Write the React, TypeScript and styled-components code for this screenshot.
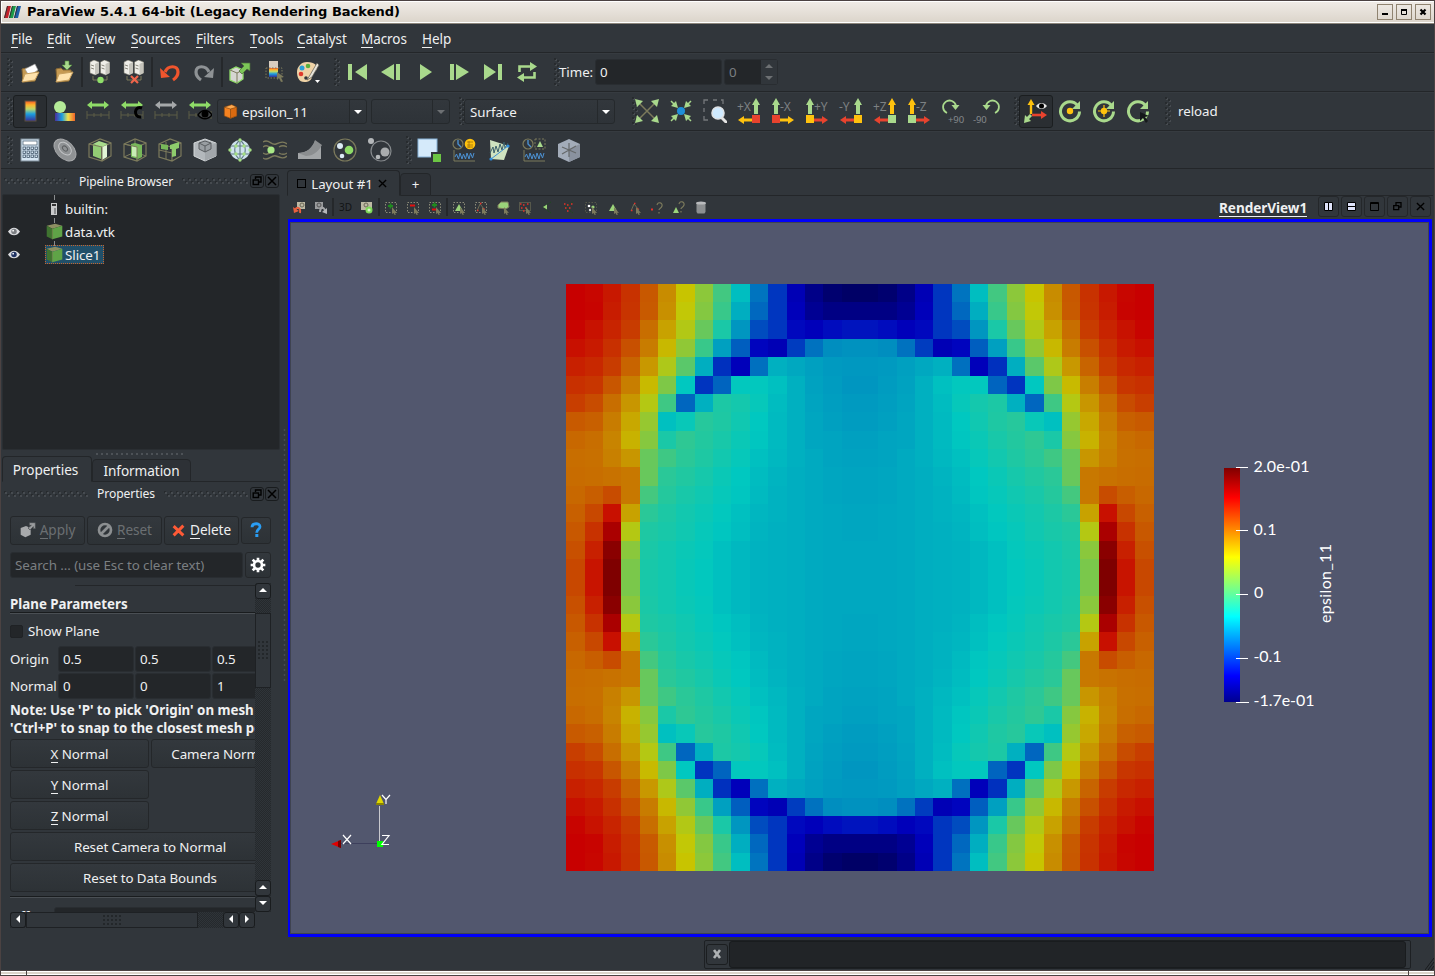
import React from 'react';
import styled, { createGlobalStyle, css } from 'styled-components';

const Global = createGlobalStyle`
  * { box-sizing: border-box; }
  body { margin: 0; background: #31363b; overflow: hidden; }
`;

const line = '#232629';
const green = '#a9d98c';
const olive = '#7c7a5c';

const Win = styled.div`
  width: 1435px; height: 976px; display: flex; flex-direction: column; background: #31363b;
  border-left: 1px solid #4b4242; border-right: 1px solid #4b4242;
  font: 13.33px/18px 'Noto Sans', sans-serif; letter-spacing: -0.06px; color: #eff0f1; white-space: nowrap; overflow: hidden;
  svg { display: block; flex: none; }
`;
const TitleBar = styled.div`
  height: 24px; flex: none; display: flex; align-items: center; padding: 0 3px 0 3px;
  border-top: 1px solid #4b4242; border-bottom: 1px solid #8c857b;
  box-shadow: inset 0 1px #fff, inset 0 -1px #fff, inset 1px 0 #fff;
  background: linear-gradient(#f0ece7, #dbd4ca);
  font: bold 13px/20px 'DejaVu Sans', sans-serif; color: #000;
`;
const TitleText = styled.div`flex: 1; padding-left: 6px; letter-spacing: 0.015px;`;
const WinBtn = styled.div`
  width: 16px; height: 16px; margin-left: 3px; border: 1px solid #8f8370; display: flex; align-items: center; justify-content: center;
`;
const MenuBar = styled.div`
  height: 29px; flex: none; display: flex; align-items: center; padding: 1px 0 0 10px; border-bottom: 1px solid ${line};
`;
const MenuItem = styled.div<{ $w: number }>`width: ${p => p.$w}px; font-size: 13.5px;`;
const Mn = styled.span`border-bottom: 1px solid currentColor; display: inline-block; line-height: 16px;`;
const Toolbar = styled.div<{ $h: number }>`
  height: ${p => p.$h}px; flex: none; display: flex; align-items: center; border-bottom: 1px solid ${line}; padding-left: 6px;
  box-shadow: inset 0 1px #363b40;
`;
const Grip = styled.div<{ $l?: number; $r?: number }>`
  width: 6px; height: 28px; flex: none; margin: 0 ${p => p.$r ?? 0}px 0 ${p => p.$l ?? 0}px;
  background: radial-gradient(circle at 1px 1px, #272b2e 0.7px, transparent 1px) 0 0 / 6px 5px,
    radial-gradient(circle at 2px 2px, #474c51 0.7px, transparent 1px) 0 0 / 6px 5px,
    radial-gradient(circle at 4px 3px, #272b2e 0.7px, transparent 1px) 0 0 / 6px 5px,
    radial-gradient(circle at 5px 4px, #474c51 0.7px, transparent 1px) 0 0 / 6px 5px;
`;
const Slot = styled.div<{ $w?: number; $on?: boolean }>`
  width: ${p => p.$w ?? 34}px; height: 33px; flex: none; display: flex; align-items: center; justify-content: center;
  ${p => p.$on && css`border: 1px solid #1b1e20; border-radius: 3px; background: #2a2e32;`}
`;
const Sep = styled.div<{ $h?: number }>`width: 2px; height: ${p => p.$h ?? 30}px; flex: none; background: #25282b;`;
const Field = styled.div<{ $w: number; $l?: number; $dim?: boolean; $h?: number }>`
  width: ${p => p.$w}px; height: ${p => p.$h ?? 26}px; margin-left: ${p => p.$l ?? 0}px; flex: none; background: #232629;
  border: 1px solid #292d31; border-radius: 3px; padding-left: 4px; display: flex; align-items: center;
  color: ${p => (p.$dim ? '#7b7f82' : '#eff0f1')};
`;
const Combo = styled.div<{ $w: number; $l?: number; $dim?: boolean }>`
  width: ${p => p.$w}px; height: 25px; margin-left: ${p => p.$l ?? 0}px; flex: none; display: flex; align-items: center;
  border: 1px solid #25292c; border-radius: 3px; background: linear-gradient(#32373c, #2e3338); padding-left: 5px; gap: 4px;
`;
const ComboText = styled.div`flex: 1; padding-top: 1px;`;
const ComboArrow = styled.div<{ $dim?: boolean }>`
  width: 17px; height: 23px; border-left: 1px solid #25292c; display: flex; align-items: center; justify-content: center; padding-top: 1px;
  &::after { content: ''; border: 4px solid transparent; border-top-color: ${p => (p.$dim ? '#6d7073' : '#fff')}; border-bottom: 0; }
`;
const Spin = styled.div`
  width: 16px; height: 24px; display: flex; flex-direction: column; align-items: center; justify-content: space-around; background: #31363b;
`;
const Tri = styled.i<{ $d: 'u' | 'd' | 'l' | 'r'; $c?: string }>`
  width: 0; height: 0; border: 4px solid transparent;
  ${p => p.$d === 'u' && css`border-top: 0; border-bottom-color: ${p.$c ?? '#fff'};`}
  ${p => p.$d === 'd' && css`border-bottom: 0; border-top-color: ${p.$c ?? '#fff'};`}
  ${p => p.$d === 'l' && css`border-left: 0; border-right-color: ${p.$c ?? '#fff'};`}
  ${p => p.$d === 'r' && css`border-right: 0; border-left-color: ${p.$c ?? '#fff'};`}
`;
const Main = styled.div`height: 767px; flex: none; display: flex;`;
const Left = styled.div`width: 279px; flex: none; display: flex; flex-direction: column;`;
const DockTitle = styled.div<{ $h: number; $b?: number }>`
  height: ${p => p.$h}px; flex: none; display: flex; align-items: center; padding: 0 1px ${p => p.$b ?? 0}px 3px; font-size: 12.1px;
`;
const HDots = styled.div`
  flex: 1; height: 6px;
  background: radial-gradient(circle at 2px 2px, #474c51 0.7px, transparent 1px) 0 0 / 6px 6px,
    radial-gradient(circle at 1px 1px, #272b2e 0.7px, transparent 1px) 0 0 / 6px 6px,
    radial-gradient(circle at 5px 5px, #474c51 0.7px, transparent 1px) 0 0 / 6px 6px,
    radial-gradient(circle at 4px 4px, #272b2e 0.7px, transparent 1px) 0 0 / 6px 6px;
`;
const DockName = styled.div<{ $m: string }>`margin: ${p => p.$m}; padding-top: 1px;`;
const DockBtn = styled.div`
  width: 14px; height: 14px; margin-left: 1px; border: 1px solid #191c1e; border-radius: 3px; display: flex; align-items: center; justify-content: center;
`;
const Tree = styled.div`
  height: 256px; flex: none; margin-left: 1px; width: 278px; background: #232629; border: 1px solid #2a2e32; border-radius: 2px; padding-top: 2px;
`;
const TreeRow = styled.div`height: 23px; display: flex; align-items: center; padding-left: 5px;`;
const Eye = styled.div`width: 16px; margin-right: 21px;`;
const Node = styled.div<{ $sel?: boolean }>`
  position: relative; display: flex; align-items: center; height: 19px; padding: 0 3px 0 0; border: 1px dotted ${p => (p.$sel ? '#c8642c' : 'transparent')};
  background: ${p => (p.$sel ? '#214f69' : 'transparent')};
  &::before { content: ''; position: absolute; left: 8px; top: -5px; width: 1px; height: 5px; background: #8a8d8f; }
`;
const SplitH = styled.div`
  height: 3px; width: 90px; margin: 3px 0 0 94px; flex: none;
  background: radial-gradient(circle at 2px 1px, #4d5257 0.8px, transparent 1.2px) 0 0 / 5px 3px;
`;
const Tabs = styled.div`height: 26px; flex: none; display: flex; align-items: flex-end; margin-left: 1px;`;
const Tab = styled.div<{ $w: number; $on?: boolean; $h: number }>`
  width: ${p => p.$w}px; height: ${p => p.$h}px; flex: none; display: flex; align-items: center; justify-content: center;
  border: 1px solid ${line}; border-radius: 4px 4px 0 0; border-bottom-color: ${p => (p.$on ? '#31363b' : line)};
  background: ${p => (p.$on ? '#31363b' : '#2d3136')};
`;
const DockTab = styled(Tab)`padding: ${p => (p.$on ? '1px 3px 0 0' : '0')}; font-size: 13.6px;`;
const TabFill = styled.div`flex: 1; border-bottom: 1px solid ${line};`;
const BtnRow = styled.div`display: flex; gap: 2px; margin: 10px 0 0 9px; height: 30px; align-items: center; flex: none; font-size: 13.6px;`;
const Btn = styled.div<{ $w: number; $h?: number; $dim?: boolean; $gap?: number }>`
  width: ${p => p.$w}px; height: ${p => p.$h ?? 29}px; flex: none; border: 1px solid #24272a; border-radius: 3px;
  background: linear-gradient(#33383d, #2d3236); display: flex; align-items: center; justify-content: center; gap: ${p => p.$gap ?? 4}px;
  color: ${p => (p.$dim ? '#6b6f72' : '#eff0f1')};
`;
const SearchRow = styled.div`display: flex; gap: 2px; margin: 7px 0 0 9px; height: 26px; flex: none;`;
const Scroll = styled.div`display: flex; margin: 5px 0 0 9px; height: 330px; flex: none;`;
const Content = styled.div`width: 245px; height: 329px; overflow: hidden; flex: none;`;
const TopLine = styled.div`height: 3px; margin-left: 65px; border-bottom: 1px solid ${line};`;
const Heading = styled.div`
  height: 28px; margin-bottom: 7px; padding-top: 9px; font-weight: bold; letter-spacing: 0; border-bottom: 1px solid #4a4f54; box-shadow: inset 0 -1px #191c1e;
`;
const CheckRow = styled.div`height: 20px; display: flex; align-items: center; gap: 5px; margin-bottom: 4px;`;
const Box = styled.div`width: 13px; height: 13px; background: #232629; border: 1px solid #1f2225; border-radius: 2px;`;
const InRow = styled.div`height: 27px; display: flex; align-items: center; gap: 1px;`;
const Lab = styled.div<{ $w: number }>`width: ${p => p.$w}px; flex: none;`;
const Note = styled.div`font-weight: bold; letter-spacing: -0.02px; line-height: 18px; height: 40px; padding-top: 2px;`;
const Line2 = styled.div`display: flex; gap: 2px; height: 31px; align-items: flex-start;`;
const Rule = styled.div`height: 2px; margin-top: 2px; background: #191c1e; border-bottom: 1px solid #4a4f54;`;
const OffRow = styled.div`display: flex; margin-top: 9px;`;
const OffLab = styled.div`width: 44px; flex: none; line-height: 18px; height: 18px;`;
const hatch = css`background: repeating-conic-gradient(#25292c 0 25%, #2f3439 0 50%) 0 0 / 2px 2px;`;
const VBar = styled.div`width: 16px; height: 329px; flex: none; display: flex; flex-direction: column; ${hatch}`;
const HBar = styled.div`width: 245px; height: 16px; margin: -1px 0 0 9px; flex: none; display: flex; ${hatch}`;
const SBtn = styled.div`
  width: 16px; height: 16px; flex: none; border: 1px solid #191c1e; border-radius: 3px; background: #31363b; display: flex; align-items: center; justify-content: center;
  padding: 0 1px 2px 0;
`;
const Thumb = styled.div<{ $w: number; $h: number }>`
  width: ${p => p.$w}px; height: ${p => p.$h}px; flex: none; border: 1px solid #1e2124; background: #31363b; display: flex; align-items: center; justify-content: center;
`;
const Dots = styled.div<{ $w: number; $h: number }>`
  width: ${p => p.$w}px; height: ${p => p.$h}px;
  background: radial-gradient(circle at 1px 1px, #23272a 0.7px, transparent 1px) 0 0 / 4px 4px;
`;
const Gap = styled.div<{ $s: number }>`flex: 0 0 ${p => p.$s}px;`;
const SplitV = styled.div`
  width: 7px; flex: none; padding: 259px 0 0 3px;
  &::before { content: ''; display: block; width: 3px; height: 255px; background: radial-gradient(circle at 1.5px 2px, #474c51 0.8px, transparent 1.2px) 0 0 / 3px 5px; }
`;
const Right = styled.div`width: 1146px; flex: none; display: flex; flex-direction: column;`;
const ViewTabs = styled.div`height: 27px; flex: none; display: flex; align-items: flex-end; padding-top: 1px;`;
const ViewTab = styled(Tab)<{ $t?: number }>`gap: 5px; padding: ${p => p.$t ?? 0}px 3px 0 0;`;
const PlusTab = styled(Tab)`padding-bottom: 1px;`;
const ViewBar = styled.div`height: 23px; flex: none; display: flex; align-items: center; padding: 0 0 2px 1px;`;
const ViewName = styled.div`
  margin-left: auto; width: 88px; font-weight: bold; border-bottom: 1px solid #eff0f1; line-height: 16px; margin-right: 11px; font-size: 13.6px; margin-top: 3px;
`;
const ViewBtn = styled.div`
  width: 21px; height: 21px; margin-right: 2px; border: 1px solid #24272a; border-radius: 3px; display: flex; align-items: center; justify-content: center;
`;
const Viewport = styled.div`height: 718px; width: 1144px; margin-left: 1px; flex: none; border: 3px solid #0000fa; background: #52576e; border-left-width: 2px;`;
const Status = styled.div`height: 34px; flex: none; display: flex; padding: 4px 0 0 703px;`;
const Prog = styled.div`width: 707px; height: 29px; border: 1px solid #1d2023; border-radius: 2px; display: flex; align-items: center; padding: 0 0 1px 1px; gap: 1px;`;
const ProgBtn = styled.div`width: 22px; height: 21px; border: 1px solid #1b1e20; border-radius: 3px; display: flex; align-items: center; justify-content: center;`;
const ProgField = styled.div`width: 677px; height: 27px; background: #212427; border: 1px solid #191c1e; border-radius: 3px;`;
const SizeGrip = styled.svg`margin: 17px 0 0 14px;`;
const Bottom = styled.div`
  height: 6px; flex: none; border-top: 1px solid #4b4242; border-bottom: 1px solid #4b4242; background: linear-gradient(#fff 1px, #dbd4ca 1px 3px, #fff 3px);
  display: flex; justify-content: space-between; padding: 0 25px;
`;
const Notch = styled.div`width: 1px; height: 4px; background: #4b4242;`;

type IP = { s?: number; children?: React.ReactNode };
const I = ({ s = 24, children }: IP) => <svg width={s} height={s} viewBox="0 0 24 24" fill="none">{children}</svg>;

const Folder = ({ save }: { save?: boolean }) => (
  <I>
    <path d="M4 9l5-1 2 2h8v3l-2 8-12 1z" fill="#c69a52" stroke="#8a6a35" />
    {!save && <path d="M7 9l10-5 3 6-9 6z" fill="#fff" stroke="#999" strokeWidth=".6" />}
    <path d="M4 22l3-8 14-2-4 8z" fill="#ffe3ad" stroke="#c79f5d" />
    {save && <path d="M13 1h4v4h3l-5 5-5-5h3z" fill={green} stroke="#4f8a3a" strokeWidth=".6" />}
  </I>
);
const Servers = ({ off }: { off?: boolean }) => (
  <I>
    {[2, 12.5].map(x => (
      <g key={x}>
        <path d={`M${x} 2l4-2 5 2v11l-4 2-5-2z`} fill="#efeee8" stroke="#77756a" strokeWidth=".6" />
        <path d={`M${x + 5} 4l4-2v11l-4 2z`} fill="#c5c4bc" />
        <path d={`M${x + 1} 5l3 1M${x + 1} 8l3 1`} stroke="#8a887c" />
      </g>
    ))}
    <path d="M5 16v4h14v-4" stroke={olive} />
    {off ? <path d="M9 16l7 7M16 16l-7 7" stroke="#f0654b" strokeWidth="2.200" /> : <circle cx="12.500" cy="20" r="3.200" fill="#8fe06a" />}
  </I>
);
const Undo = ({ c, flip }: { c: string; flip?: boolean }) => (
  <I><g transform={flip ? 'translate(24 0) scale(-1 1)' : ''}>
    <path d="M7 12C10 5 20 5 20 12c0 4-2 6-5 8" stroke={c} strokeWidth="3.200" /><path d="M2 8l1 10 9-1z" fill={c} />
  </g></I>
);
const Cube = ({ mode, c = '#78b85a' }: { mode: number; c?: string }) => (
  <I>
    <path d="M1 6l11-5 11 4v13l-9 5-13-4zM1 6l13 3 9-4M14 9v14" stroke={olive} strokeWidth="1.200" />
    {mode === 0 && <><path d="M5 6l8 2v13l-8-3z" fill="#93cd74" /><path d="M14 9l5-2v12l-5 3z" fill="#e2f5d6" /><path d="M5 6l6-3 9 3-6 3z" fill="#a8db8b" /><path d="M1 6l13 3M14 9v14" stroke={olive} /></>}
    {mode === 1 && <><path d="M12 1v13M1 19l11-5 11 4" stroke={olive} /><path d="M8 6l4-1 7 2v12l-4 2-7-2z" fill={c} /><path d="M9 8l5 1v10l-5-1z" fill="#c9edb4" /><path d="M1 6l13 3M14 9v14" stroke={olive} /></>}
    {mode === 2 && <><path d="M1 12l13 3M8 4v17" stroke={olive} /><path d="M3 6l7 1v5l-7-1z" fill={c} /><path d="M12 7l9-3v6l-3 1v7l-4 1v-8h-2z" fill="#8ecb6c" /></>}
  </I>
);
const Solid = ({ a, b, d, s, edge }: { a: string; b: string; d: string; s?: number; edge?: string }) => (
  <I s={s}><path d="M2 5l12-4 8 4v14l-10 4-10-4z" fill={a} /><path d="M2 5l12-4 8 4-10 3z" fill={d} /><path d="M12 8l10-3v14l-10 4z" fill={b} />
    {edge && <path d="M2 5l12-4 8 4v14l-10 4-10-4zM2 5l10 3 10-3M12 8v15" stroke={edge} />}</I>
);
const SourceCube = () => (
  <I s={17}><path d="M1 4l12-3 10 3-14 4z" fill="#8d8f62" /><path d="M1 4l8 4v15l-8-4z" fill="#3f7330" /><path d="M9 8l14-4v15L9 23z" fill="#5fa347" /><path d="M9 8v15" stroke="#7b8a50" /></I>
);
const Range = ({ c = '#8fdc68', k }: { c?: string; k?: string }) => (
  <I>
    <path d="M1 6l5-4v2.500h12V2l5 4-5 4V7.500H6V10z" fill={c} />
    <path d="M1 16h22M1 12v8M8 14v4M15 14v4M23 12v8" stroke="#5c5c47" />
    {k === 'c' && <path d="M22 9c-8-3-9 10-1 9" stroke="#000" strokeWidth="3" />}
    {k === 'e' && <><path d="M10 16c4-6 10-6 14 0-4 5-10 5-14 0z" fill="#45484a" stroke="#000" strokeWidth="1.400" /><circle cx="17" cy="15" r="3.500" fill="#000" /></>}
  </I>
);
const Gradient = () => (
  <linearGradient id="rb" x1="0" y1="1" x2="0" y2="0"><stop offset="0" stopColor="#35309c" /><stop offset=".35" stopColor="#1c9fe0" /><stop offset=".6" stopColor="#bcd86a" /><stop offset=".8" stopColor="#ffb52c" /><stop offset="1" stopColor="#f25b28" /></linearGradient>
);
const RED = '#e8432e', YEL = '#ffc20e';
const AxisIcon = ({ t, l, up, box, hor }: { t: string; l: boolean; up: string; box: string; hor: string }) => {
  const x = l ? 18 : 6;
  return (
    <svg width="30" height="28" viewBox="0 0 30 28" fill="none"><g transform={l ? 'translate(4 0)' : 'translate(2 0)'}>
      <text x={l ? -1 : 10} y="14" fontSize="12" fill="#7d8183" fontFamily="Noto Sans">{t}</text>
      <path d={`M${x} 1l4 7h-2v9h-4V8h-2z`} fill={up} />
      <path d={l ? 'M0 23l6-4v2.500h8v3H6V27z' : 'M24 23l-6-4v2.500h-8v3h8V27z'} fill={hor} />
      <rect x={x - 4} y="18" width="8" height="8" fill={box} />
    </g></svg>
  );
};
const Rot = ({ t, flip }: { t: string; flip?: boolean }) => (
  <svg width="30" height="30" viewBox="0 0 30 30" fill="none">
    <g transform={flip ? 'translate(32 0) scale(-1 1)' : ''}><path d="M9 17a6.500 6.500 0 1 1 9-7" stroke={green} strokeWidth="1.800" /><path d="M13.500 9h8l-4 5z" fill={green} /></g>
    <text x={flip ? 1 : 10} y="27" fontSize="9.500" fill="#85898c" fontFamily="Noto Sans">{t}</text>
  </svg>
);
const Ring = ({ k }: { k: number }) => (
  <I><path d="M19.500 6.500a9.500 9.500 0 1 0 2 6" stroke={green} strokeWidth="3" /><path d="M22 2v8h-8z" fill={green} />
    {k < 2 && <circle cx="12" cy="12" r={3.200} fill={YEL} />}
    {k === 1 && <path d="M12 6v12M6 12h12" stroke={YEL} strokeWidth="1.200" />}
    {k === 2 && <path d="M14 13l9 4-4 1 3 4-2 2-3-5-3 3z" fill="#15181a" />}
  </I>
);
const Clock = ({ k }: { k: number }) => (
  <I>
    <circle cx="6" cy="6" r="5" stroke={olive} strokeWidth="1.200" /><path d="M6 2v4l3 3" stroke="#4b8fd0" strokeWidth="1.400" />
    {k === 0 ? <><circle cx="18" cy="6" r="5.300" fill={YEL} /><path d="M15 4h6M15 7h6M15 9h6M17 3v7" stroke="#a0720a" strokeWidth=".8" /></>
      : <><path d="M13 1h10v10H13z" stroke={olive} strokeDasharray="2 1.500" /><path d="M18 3l3 6h-6z" fill={green} /></>}
    <path d="M2 12v11h21" stroke={olive} /><path d="M3 19l1.500-3 2 5 1.500-6 2 6 1.500-5 2 5 1.500-6 2 6 1.500-6 2 5 1.500-5" stroke="#4b8fd0" />
  </I>
);
const Mini = ({ k }: { k: string }) => {
  const sel = <path d="M9 8l5 6-2-.3.800 2-1.200.3-1-2L9 15z" fill={olive} />;
  const box = <rect x="2.500" y="3.500" width="11" height="10" stroke="#8b8a78" strokeDasharray="1.500 1.500" />;
  const tri = <path d="M8 5l4 7H4z" fill="#9bd47a" />;
  const out = <path d="M4 12l3-7 5 6" stroke={olive} strokeWidth=".8" />;
  const dots = <path d="M4 11.500h1.500M7 4.500h1.500M10 10h1.500" stroke="#e8302a" strokeWidth="1.500" />;
  const red = <path d="M3 5h1.500M6 6h1.500M4 9h1.500M8 9h1.500M6 12h1.500M10 5h1.500" stroke="#e8302a" strokeWidth="1.600" />;
  const frus = <path d="M12 3L4 8l8 6" stroke="#1f4a1f" strokeDasharray="2 1" />;
  const m: Record<string, React.ReactNode> = {
    camU: <><path d="M6 3h8v7H6z" fill="#bdb9a4" /><circle cx="11" cy="6" r="2" stroke="#6b6857" /><path d="M4 12c1-5 6-4 5 2" stroke="#e8603f" strokeWidth="2" /><path d="M2 8l1 6 5-2z" fill="#e8603f" /></>,
    camR: <><path d="M2 3h8v7H2z" fill="#9a9c9e" /><circle cx="6" cy="6" r="2" stroke="#555" /><path d="M7 13c0-5 4-6 5-1" stroke="#a5a7a9" strokeWidth="2" /><path d="M14 9v6l-5-2z" fill="#b5b7b9" /></>,
    cam: <><path d="M2 3h11v8H2z" fill="#bdb9a4" /><circle cx="7" cy="6" r="2" stroke="#6b6857" /><circle cx="10" cy="11" r="3.500" fill="#7ed957" /><circle cx="10" cy="11" r="1.500" fill="#d8f5c8" /></>,
    add: <>{box}<path d="M5 7h5M7.500 4.500v5" stroke="#1f8a1f" strokeWidth="1.800" />{sel}</>,
    sub: <>{box}<path d="M5 6.500h5" stroke="#e01010" strokeWidth="2" />{sel}</>,
    tog: <>{box}<path d="M5 6h5M7.500 3.500v5" stroke="#1f8a1f" strokeWidth="1.800" /><path d="M5 10.500h5" stroke="#e01010" strokeWidth="2" />{sel}</>,
    cell: <>{box}{tri}{sel}</>, pt: <>{box}{out}{dots}{sel}</>,
    poly: <><path d="M3 6l3-3h7l1 5-3 2-8-1z" fill="#9bd47a" stroke={olive} />{sel}</>,
    polyp: <><rect x="2.500" y="3.500" width="11" height="8" stroke={olive} strokeDasharray="1 1" />{red}{sel}</>,
    fr: <>{frus}<path d="M4 8l4-2.500v5z" fill="#9bd47a" /></>, frp: <>{frus}{red}</>,
    blk: <><rect x="2.500" y="3.500" width="11" height="10" stroke="#55584a" strokeDasharray="1.500 1.500" /><circle cx="6" cy="7" r="1.300" fill="#fff" /><circle cx="10" cy="8" r="1.600" fill="#9bd47a" /><circle cx="7" cy="11" r="1.200" fill="#ddd" />{sel}</>,
    ic: <>{tri}{sel}</>, ip: <>{out}{dots}{sel}</>,
    hp: <><path d="M2 10.500h2" stroke="#e8302a" strokeWidth="2" /><path d="M8 6c1-4 6-2 5 1s-3 2-3 4M10 13v1.500" stroke={olive} strokeWidth="1.200" /></>,
    hc: <><path d="M5 8l3 6H2z" fill="#9bd47a" /><path d="M8 5c1-4 6-2 5 1s-3 2-3 4M10 12v1.500" stroke={olive} strokeWidth="1.200" /></>,
    trash: <><path d="M3.500 4h9v9l-1 1.500h-7l-1-1.500z" fill="#8c8f91" /><ellipse cx="8" cy="4" rx="5" ry="1.600" fill="#b9bbbd" /></>,
  };
  return <svg width="16" height="16" viewBox="0 0 16 16" fill="none">{m[k]}</svg>;
};
const EyeIcon = ({ c }: { c: string }) => (
  <svg width="12" height="9" viewBox="0 0 14 10"><path d="M0 5c4-6 10-6 14 0-4 6-10 6-14 0z" fill="#dcdde0" /><circle cx="7" cy="5" r="3.200" fill={c} /><circle cx="6" cy="4" r="1" fill="#fff" /></svg>
);
const RestoreIcon = () => <svg width="10" height="10" viewBox="0 0 10 10" fill="none" stroke="#000"><path d="M3.500 3V1h5.500v5H7" strokeWidth="1.400" /><rect x="1.200" y="4" width="5.300" height="4.500" strokeWidth="1.400" /></svg>;
const XIcon = ({ s = 10 }: { s?: number }) => <svg width={s} height={s} viewBox="0 0 10 10" stroke="#000" strokeWidth="1.500"><path d="M1 1l8 8M9 1l-8 8" /></svg>;
const DockBtns = () => <><DockBtn><RestoreIcon /></DockBtn><DockBtn><XIcon /></DockBtn></>;

/* Each entry is a position on the colour ramp, in hundredths of a control-point step. */
const quadrant = [
  [400, 397, 388, 375, 356, 330, 302, 270, 233, 195, 158, 127, 90, 40, 12, 2],
  [400, 398, 386, 374, 355, 328, 297, 266, 228, 187, 152, 127, 95, 52, 36, 35],
  [398, 391, 382, 370, 345, 319, 289, 252, 213, 175, 138, 127, 104, 96, 106, 110],
  [392, 387, 376, 360, 338, 308, 272, 228, 180, 147, 102, 90, 130, 157, 171, 173],
  [384, 380, 370, 350, 324, 287, 245, 187, 124, 96, 156, 188, 184, 180, 177, 176],
  [376, 373, 357, 337, 307, 263, 200, 126, 150, 201, 201, 196, 188, 181, 178, 175],
  [369, 362, 345, 325, 290, 231, 151, 188, 214, 210, 203, 194, 188, 182, 179, 177],
  [355, 352, 338, 316, 275, 196, 204, 219, 215, 208, 200, 193, 188, 183, 180, 178],
  [348, 345, 334, 311, 267, 213, 223, 217, 212, 205, 199, 193, 188, 183, 182, 180],
  [345, 344, 336, 325, 252, 231, 221, 215, 209, 203, 196, 192, 188, 185, 182, 181],
  [346, 345, 343, 340, 252, 221, 216, 211, 205, 200, 194, 190, 187, 185, 183, 182],
  [348, 353, 362, 340, 234, 218, 212, 208, 203, 199, 193, 189, 187, 185, 183, 182],
  [352, 364, 392, 319, 221, 214, 209, 205, 201, 196, 191, 189, 187, 185, 184, 183],
  [356, 375, 424, 290, 215, 212, 208, 203, 199, 195, 190, 188, 187, 185, 184, 183],
  [360, 384, 450, 269, 213, 209, 205, 202, 196, 192, 189, 188, 187, 185, 184, 184],
  [364, 390, 458, 261, 212, 209, 204, 201, 196, 192, 189, 188, 187, 185, 184, 184],
];
const ramp = [[0, 0, 100], [0, 0, 190], [0, 200, 192], [200, 200, 0], [200, 0, 0], [75, 0, 0]];
const shade = (n: number) => {
  const i = Math.min(4, Math.floor(n / 100)), f = n / 100 - i;
  return `rgb(${ramp[i].map((v, k) => Math.round(v + (ramp[i + 1][k] - v) * f)).join(',')})`;
};
const ex = (i: number) => (i ? Math.round(i * 18.36 + 0.2) : 0);
const ey = (i: number) => (i ? Math.round(i * 18.35 - 0.25) : 0);
const cells = Array.from({ length: 1024 }, (_, n) => {
  const c = n % 32, r = Math.floor(n / 32);
  return { x: ex(c), y: ey(r), w: ex(c + 1) - ex(c), h: ey(r + 1) - ey(r), f: shade(quadrant[r < 16 ? r : 31 - r][c < 16 ? c : 31 - c]) };
});
const Scene = () => (
  <svg width="1139" height="712" viewBox="290 222 1139 712" fill="none">
    <defs><linearGradient id="jet" x1="0" y1="1" x2="0" y2="0">
      <stop offset="0" stopColor="#00008f" /><stop offset=".111" stopColor="#00f" /><stop offset=".365" stopColor="#0ff" /><stop offset=".619" stopColor="#ff0" /><stop offset=".873" stopColor="#f00" /><stop offset="1" stopColor="#800000" />
    </linearGradient></defs>
    <rect x="290.500" y="222.500" width="1138" height="711" stroke="#3f4350" />
    <g transform="translate(566 284)" shapeRendering="crispEdges">{cells.map((c, i) => <rect key={i} x={c.x} y={c.y} width={c.w} height={c.h} fill={c.f} />)}</g>
    <rect x="1224" y="468" width="16" height="234" fill="url(#jet)" />
    <path d="M1236 467.500h12M1236 530.500h12M1236 594.500h12M1236 658.500h12M1236 702.500h13" stroke="#fff" />
    <g fill="#fff" fontFamily="Lato" fontSize="16" letterSpacing="0">
      <text x="1253.500" y="472" textLength="56">2.0e-01</text><text x="1253.500" y="535" textLength="23">0.1</text><text x="1254" y="598">0</text>
      <text x="1253.500" y="662" textLength="28">-0.1</text><text x="1253.500" y="706" textLength="61">-1.7e-01</text>
      <text transform="translate(1331 623) rotate(-90)" textLength="79">epsilon_11</text>
    </g>
    <path d="M376 804l4-9 4 9z" fill="#e0d800" /><path d="M376 803h8v2h-8z" fill="#8b8500" />
    <path d="M379 843.500H340" stroke="#3d3f5c" /><path d="M379.500 844V806" stroke="#c9c9ce" /><path d="M331 844l10-4v8z" fill="#e00000" /><path d="M338 841l3-1v8l-3-1z" fill="#700" />
    <rect x="377" y="841" width="6" height="6" fill="#0f0" />
    <g stroke="#fff" strokeWidth="1.200"><path d="M343 835l8 9M351 835l-8 9M382 795l4 4.500 4-4.500M386 799v5M382 835.500h7l-7 9h7" /></g>
  </svg>
);

export default function App() {
  return (
    <Win>
      <Global />
      <TitleBar>
        <svg width="17" height="12" viewBox="0 0 17 12"><path d="M3 0h4L4 12H0z" fill="#c0202a" /><path d="M8 0h4L9 12H5z" fill="#1c9a48" /><path d="M13 0h4l-3 12h-4z" fill="#1d5fa8" /><path d="M3 0h1L1 12H0zM8 0h1L6 12H5zM13 0h1l-3 12h-1z" fill="#333" /></svg>
        <TitleText>ParaView 5.4.1 64-bit (Legacy Rendering Backend)</TitleText>
        <WinBtn><svg width="8" height="8"><path d="M1 6h6" stroke="#000" strokeWidth="2" /></svg></WinBtn>
        <WinBtn><svg width="8" height="8" fill="none"><path d="M1.500 2h5v4.500h-5z" stroke="#000" /><path d="M1 2h6" stroke="#000" strokeWidth="2" /></svg></WinBtn>
        <WinBtn><svg width="8" height="8"><path d="M1.500 1.500l5 5M6.500 1.500l-5 5" stroke="#000" strokeWidth="2.200" /></svg></WinBtn>
      </TitleBar>
      <MenuBar>
        {([['File', 36], ['Edit', 39], ['View', 45], ['Sources', 65], ['Filters', 54], ['Tools', 47], ['Catalyst', 64], ['Macros', 61], ['Help', 40]] as [string, number][]).map(([t, w]) => (
          <MenuItem key={t} $w={w}><Mn>{t[0]}</Mn>{t.slice(1)}</MenuItem>
        ))}
      </MenuBar>
      <Toolbar $h={39}>
        <Grip />
        <Slot><Folder /></Slot><Slot><Folder save /></Slot><Sep />
        <Slot><Servers /></Slot><Slot><Servers off /></Slot><Sep />
        <Slot><Undo c="#f0552d" /></Slot><Slot><Undo c="#8e9295" flip /></Slot><Sep />
        <Slot><I><path d="M2 10l6-3 7 3v9l-6 4-7-3z" fill="#d6d6d2" stroke="#8fdc68" strokeWidth="1.300" /><path d="M2 10l7 3 6-3M9 13v10" stroke={olive} /><path d="M13 3h9v8l-3-2-5 5-3-3 5-5z" fill="#7cc657" stroke="#4c6a3a" strokeWidth=".7" /></I></Slot>
        <Slot><I><defs><Gradient /></defs><rect x="7" y="1" width="9" height="7" fill="#d8cdc0" /><rect x="7" y="8" width="9" height="9" fill="url(#rb)" /><path d="M4 8h16v10H4z" stroke={olive} strokeDasharray="1.500 1.500" /><path d="M15 12l7 5-3 .5 2 4-2 .5-2-4-2 2z" fill={olive} /></I></Slot>
        <Slot><I><path d="M11 2c8 0 11 4 10 7s-5 1-5 4 1 8-6 9S1 17 1 12 5 2 11 2z" fill="#f0d3a6" /><circle cx="6" cy="8" r="2.500" fill="#2a9fd8" /><circle cx="12" cy="6" r="2.300" fill="#5ab03c" /><circle cx="5" cy="14" r="2.300" fill="#e03a2c" /><circle cx="10" cy="18" r="1.800" fill="#31363b" /><path d="M21 3l-7 12-3 5 5-3 7-12z" fill="#e8e4da" stroke="#5f5b50" strokeWidth=".7" /><path d="M19 20h5l-2.500 3z" fill="#fff" /></I></Slot>
        <Grip $l={9} $r={0} />
        <Slot><I><path d="M3 4v16h4V4zM22 4L10 12l12 8z" fill={green} /></I></Slot>
        <Slot><I><path d="M17 4v16h4V4zM15 4L2 12l13 8z" fill={green} /></I></Slot>
        <Slot><I><path d="M7 4l12 8-12 8z" fill={green} /></I></Slot>
        <Slot><I><path d="M3 4v16h4V4zM9 4l13 8-13 8z" fill={green} /></I></Slot>
        <Slot><I><path d="M17 4v16h4V4zM3 4l12 8-12 8z" fill={green} /></I></Slot>
        <Slot><I><path d="M4.500 12V6.500h12M19.500 12v5.500H8" stroke={green} strokeWidth="2.600" /><path d="M15 2l7 4.500-7 4.500zM9 13v9l-7-4.500z" fill={green} /></I></Slot>
        <Grip $l={10} $r={-1} />
        Time:
        <Field $w={127} $l={2}>0</Field>
        <Field $w={54} $l={2} $dim>0<Gap $s={24} /><Spin><Tri $d="u" $c="#6d7073" /><Tri $d="d" $c="#6d7073" /></Spin></Field>
      </Toolbar>
      <Toolbar $h={39}>
        <Grip />
        <Slot $on><I><rect x="7" y="2" width="11" height="20" fill="url(#rb)" stroke="#5c5140" /></I></Slot>
        <Slot><I><circle cx="8" cy="8" r="6" fill="#b5eb98" /><defs><linearGradient id="rh"><stop stopColor="#4b2d9c" /><stop offset=".35" stopColor="#1c9fe0" /><stop offset=".65" stopColor="#f0e04a" /><stop offset="1" stopColor="#f0622a" /></linearGradient></defs><rect x="3" y="14" width="20" height="8" fill="url(#rh)" /></I></Slot>
        <Slot><Range /></Slot><Slot><Range k="c" /></Slot><Slot><Range c="#a5a8aa" /></Slot><Slot><Range k="e" /></Slot>
        <Combo $w={150}><Solid s={15} a="#f58220" b="#d96a10" d="#ffa94f" edge="#7a4310" /><ComboText>epsilon_11</ComboText><ComboArrow /></Combo>
        <Combo $w={79} $l={4}><ComboText /><ComboArrow $dim /></Combo>
        <Grip $l={9} $r={-1} />
        <Combo $w={151}><ComboText>Surface</ComboText><ComboArrow /></Combo>
        <Grip $l={17} $r={-8} />
        <Slot><I><path d="M4 4l16 16M20 4L4 20" stroke={olive} strokeWidth="1.500" /><path d="M0 0l8 2-6 6zM24 0l-8 2 6 6zM0 24l8-2-6-6zM24 24l-8-2 6-6z" fill={green} /></I></Slot>
        <Slot><I><path d="M2 2l5 5M22 2l-5 5M2 22l5-5M22 22l-5-5" stroke={green} strokeWidth="1.500" /><path d="M9 9L2 7l5-5zM15 9l7-2-5-5zM9 15l-7 2 5 5zM15 15l7 2-5 5z" fill={green} /><circle cx="12" cy="12" r="4" fill="#1f8fd8" /></I></Slot>
        <Slot><I><path d="M1 5V1h4M10 1h4M18 1h2v4M1 9v4M1 17v4h4" stroke="#74787b" strokeWidth="1.300" /><path d="M18 18l6 6" stroke="#e4e4e4" strokeWidth="3" /><circle cx="15" cy="14" r="6" fill="#cfeaff" stroke="#dfe2e4" strokeWidth="1.600" /></I></Slot>
        <Slot><AxisIcon t="+X" l up={green} box={RED} hor={YEL} /></Slot>
        <Slot><AxisIcon t="-X" l={false} up={green} box={RED} hor={YEL} /></Slot>
        <Slot><AxisIcon t="+Y" l={false} up={green} box={YEL} hor={RED} /></Slot>
        <Slot><AxisIcon t="-Y" l up={green} box={YEL} hor={RED} /></Slot>
        <Slot><AxisIcon t="+Z" l up={YEL} box={green} hor={RED} /></Slot>
        <Slot><AxisIcon t="-Z" l={false} up={YEL} box={green} hor={RED} /></Slot>
        <Slot><Rot t="+90" /></Slot><Slot><Rot t="-90" flip /></Slot>
        <Grip $l={10} $r={-1} />
        <Slot $on><I><path d="M7 15V3" stroke={YEL} strokeWidth="2.400" /><path d="M7 0l3.500 6h-7z" fill={YEL} /><path d="M8 16h10" stroke={RED} strokeWidth="2.600" /><path d="M23 16l-6-4v8z" fill={RED} /><path d="M7 16l-5 5" stroke={green} strokeWidth="3" /><path d="M0 24l1-8 6 6z" fill={green} /><path d="M12 7c3-4 8-4 11 0-3 4-8 4-11 0z" fill="#e8e8e8" /><circle cx="17.500" cy="7" r="2.500" fill="#000" /></I></Slot>
        <Slot><Ring k={0} /></Slot><Slot><Ring k={1} /></Slot><Slot><Ring k={2} /></Slot>
        <Grip $l={10} $r={7} />
        reload
      </Toolbar>
      <Toolbar $h={38}>
        <Grip $r={-1} />
        <Slot $w={35}><I><rect x="3" y="1" width="18" height="22" fill="#d6e6f3" stroke="#7f8d99" /><rect x="5" y="3" width="14" height="4" fill="#fff" stroke="#55697a" strokeWidth=".8" />{[9, 13, 17].map(y => [5, 9, 13, 17].map(x => <rect key={x + '-' + y} x={x} y={y} width="2.500" height="2.500" stroke="#44586a" strokeWidth=".8" />))}</I></Slot>
        <Slot $w={35}><I><g transform="rotate(45 12 12)"><ellipse cx="12" cy="12" rx="13" ry="8.500" fill="#8f9294" stroke="#a8aaac" /><ellipse cx="11" cy="11" rx="7.500" ry="5" stroke="#c3c5c7" /><ellipse cx="11" cy="11" rx="3" ry="2" stroke="#5d6062" /></g></I></Slot>
        <Slot $w={35}><Cube mode={0} /></Slot><Slot $w={35}><Cube mode={1} /></Slot><Slot $w={35}><Cube mode={2} /></Slot>
        <Slot $w={35}><I><path d="M1 5l11-4 11 4v13l-11 5-11-5z" fill="#b3b8bc" stroke="#d3d7d9" /><path d="M12 10l11-5v13l-11 5z" fill="#a2a7ab" /><path d="M6 5l6-2 6 2v6l-6 3-6-3z" fill="#999ea2" stroke="#595d60" /><path d="M6 5l6 3 6-3M12 8v6" stroke="#595d60" /></I></Slot>
        <Slot $w={35}><I><circle cx="12" cy="12" r="10" fill="#cfe3ee" /><path d="M12 2c-7 6-7 14 0 20M12 2c7 6 7 14 0 20M3 8h18M3 16h18M12 2v20" stroke="#5e7a80" strokeWidth="1.100" />{[[12, 2], [2, 12], [22, 12], [12, 22], [8, 8], [16, 8], [8, 16], [16, 16]].map(([x, y]) => <circle key={x + ',' + y} cx={x} cy={y} r="1.700" fill="#a5df83" />)}</I></Slot>
        <Slot $w={35}><I><path d="M0 4c6-4 8 4 13 2s8-3 11 0M0 9c4-3 5 0 7 0M16 9c3-2 5-2 8 0M0 20c6 4 8-4 13-2s8 3 11 0M0 15c4 3 5 0 7 0M16 15c3 2 5 2 8 0" stroke={olive} strokeWidth="1.400" /><circle cx="8" cy="12" r="3.600" fill="#a9e887" /></I></Slot>
        <Slot $w={35}><I><path d="M0 15c8 0 14-4 17-12l6 5v13H0z" fill="#a3a6a8" /><path d="M0 15c8 0 14-4 17-13l7 5c-4 8-11 11-16 11z" fill="#8b8e90" /></I></Slot>
        <Slot $w={35}><I><circle cx="12" cy="12" r="11" stroke={olive} strokeWidth="1.200" /><circle cx="7" cy="8" r="3" fill="#dcebf5" /><circle cx="16" cy="12" r="4.300" fill="#8fdc68" /><circle cx="9" cy="18" r="2.300" fill="#dcebf5" /></I></Slot>
        <Slot $w={35}><I><circle cx="13" cy="13" r="10" stroke="#85898c" strokeWidth="1.200" /><circle cx="3" cy="3" r="3" fill="#b5b8ba" /><circle cx="17" cy="14" r="4.500" fill="#a9acae" /><circle cx="10" cy="19" r="2.300" fill="#b5b8ba" /></I></Slot>
        <Grip $l={9} $r={-1} />
        <Slot $w={35}><I><rect x="1" y="1" width="19" height="18" fill="#d5eafa" stroke="#87b2d8" /><rect x="14" y="14" width="10" height="10" fill="#31363b" /><rect x="16" y="16" width="8" height="8" fill="#6cc644" /></I></Slot>
        <Slot $w={35}><Clock k={0} /></Slot>
        <Slot $w={35}><I><path d="M3 2l19 6-5 14-13-1z" fill="#cfe3c0" /><path d="M3 15l3-6 1 6 2-7 2 6 2-8 2 6 2-8 1 6 3-5" stroke="#3b5f6a" /><path d="M4 21L21 8" stroke="#3f8fd0" /><circle cx="4" cy="21" r="1.600" fill="#2f8fe0" /><circle cx="21" cy="8" r="1.600" fill="#2f8fe0" /></I></Slot>
        <Slot $w={35}><Clock k={1} /></Slot>
        <Slot $w={35}><I><path d="M1 6l11-5 11 5v13l-11 5-11-5z" fill="#a3acb9" /><path d="M12 11l11-5v13l-11 5z" fill="#8a929f" /><path d="M12 5v14M5 9l14 6M19 8L5 16" stroke="#66696a" strokeWidth="1.200" /></I></Slot>
      </Toolbar>
      <Main>
        <Left>
          <DockTitle $h={25} $b={1}><HDots /><DockName $m="0 9px">Pipeline Browser</DockName><HDots /><Gap $s={1} /><DockBtns /></DockTitle>
          <Tree>
            <TreeRow><Eye /><Node><svg width="18" height="14" viewBox="0 0 18 14"><rect x="5" y="1" width="6" height="12" fill="#c9cacb" /><rect x="6" y="2" width="4" height="2" fill="#333" /><rect x="8" y="6" width="2" height="6" fill="#8a8c8e" /></svg><Gap $s={1} />builtin:</Node></TreeRow>
            <TreeRow><Eye><EyeIcon c="#7b7e82" /></Eye><Node><SourceCube /><Gap $s={2} />data.vtk</Node></TreeRow>
            <TreeRow><Eye><EyeIcon c="#1f3263" /></Eye><Node $sel><SourceCube /><Gap $s={2} />Slice1</Node></TreeRow>
          </Tree>
          <SplitH />
          <Tabs><DockTab $w={90} $h={26} $on>Properties</DockTab><DockTab $w={99} $h={23}>Information</DockTab><TabFill /></Tabs>
          <DockTitle $h={23}><HDots /><DockName $m="0 9px">Properties</DockName><HDots /><Gap $s={1} /><DockBtns /></DockTitle>
          <BtnRow>
            <Btn $w={75} $dim><I s={16}><path d="M1 9l8-3 7 3v10l-8 4-7-4z" fill="#a8aaac" /><path d="M12 9l5-4h-3V1h9v9h-3V7l-5 5z" fill="#9a9c9e" stroke="#44484c" /></I><span><Mn>A</Mn>pply</span></Btn>
            <Btn $w={75} $dim><I s={16}><circle cx="12" cy="12" r="9" stroke="#8c8f91" strokeWidth="4" /><path d="M18 6L6 18" stroke="#8c8f91" strokeWidth="4" /></I><span><Mn>R</Mn>eset</span></Btn>
            <Btn $w={75} $gap={5}><I s={13}><path d="M3 4l18 17M21 3L3 21" stroke="#ff5a36" strokeWidth="5.500" /></I><span><Mn>D</Mn>elete</span></Btn>
            <Btn $w={30} $h={27}><I s={16}><path d="M6 8c0-7 12-7 12-1 0 4-5 4-5 9" stroke="#2a9df4" strokeWidth="4.200" /><rect x="11" y="18" width="4.500" height="4.500" fill="#2a9df4" /></I></Btn>
          </BtnRow>
          <SearchRow>
            <Field $w={233} $dim>Search ... (use Esc to clear text)</Field>
            <Btn $w={26} $h={26}><I s={16}><circle cx="12" cy="12" r="6" stroke="#fff" strokeWidth="4" /><path d="M12 1v5M12 18v5M1 12h5M18 12h5M4 4l4 4M16 16l4 4M20 4l-4 4M8 16l-4 4" stroke="#fff" strokeWidth="4" /></I></Btn>
          </SearchRow>
          <Scroll>
            <Content>
              <TopLine />
              <Heading>Plane Parameters</Heading>
              <CheckRow><Box />Show Plane</CheckRow>
              <InRow><Lab $w={47}>Origin</Lab><Field $w={76}>0.5</Field><Field $w={76}>0.5</Field><Field $w={76}>0.5</Field></InRow>
              <InRow><Lab $w={47}>Normal</Lab><Field $w={76}>0</Field><Field $w={76}>0</Field><Field $w={76}>1</Field></InRow>
              <Note>Note: Use 'P' to pick 'Origin' on mesh<br />'Ctrl+P' to snap to the closest mesh point</Note>
              <Line2><Btn $w={139}><span><Mn>X</Mn> Normal</span></Btn><Btn $w={139}>Camera Normal</Btn></Line2>
              <Line2><Btn $w={139}><span><Mn>Y</Mn> Normal</span></Btn></Line2>
              <Line2><Btn $w={139}><span><Mn>Z</Mn> Normal</span></Btn></Line2>
              <Line2><Btn $w={280}>Reset Camera to Normal</Btn></Line2>
              <Line2><Btn $w={280}>Reset to Data Bounds</Btn></Line2>
              <Rule />
              <OffRow><OffLab>Offset</OffLab><Field $w={220}> </Field></OffRow>
            </Content>
            <VBar><SBtn><Tri $d="u" /></SBtn><Gap $s={14} /><Thumb $w={16} $h={75}><Dots $w={10} $h={19} /></Thumb><Gap $s={192} /><SBtn><Tri $d="u" /></SBtn><SBtn><Tri $d="d" /></SBtn></VBar>
          </Scroll>
          <HBar><SBtn><Tri $d="l" /></SBtn><Thumb $w={172} $h={16}><Dots $w={19} $h={10} /></Thumb><Gap $s={25} /><SBtn><Tri $d="l" /></SBtn><SBtn><Tri $d="r" /></SBtn></HBar>
        </Left>
        <SplitV />
        <Right>
          <ViewTabs>
            <ViewTab $w={113} $h={26} $t={1} $on><svg width="9" height="9" fill="none"><rect x=".5" y=".5" width="8" height="8" stroke="#000" /></svg>Layout #1<XIcon s={9} /></ViewTab>
            <PlusTab $w={31} $h={23}>+</PlusTab>
            <TabFill />
          </ViewTabs>
          <ViewBar>
            {['camU', 'camR', '|', '3D', 'cam', '|', 'add', 'sub', 'tog', '|', 'cell', 'pt', 'poly', 'polyp', 'fr', 'frp', 'blk', 'ic', 'ip', 'hp', 'hc', 'trash'].map((k, i) => (
              k === '|' ? <Sep key={i} $h={18} /> : <Slot key={i} $w={22}>{k === '3D' ? <svg width="14" height="12"><text x="1" y="9.500" fontSize="10" fill="#121415" fontFamily="Noto Sans">3D</text></svg> : <Mini k={k} />}</Slot>
            ))}
            <ViewName>RenderView1</ViewName>
            <ViewBtn><svg width="9" height="9" fill="#dfe3fa"><path d="M.5.5h4v8h-4zM4.500.5h4v8h-4z" stroke="#000" /></svg></ViewBtn>
            <ViewBtn><svg width="9" height="9" fill="#dfe3fa"><path d="M.5.5h8v4h-8zM.5 4.500h8v4h-8z" stroke="#000" /></svg></ViewBtn>
            <ViewBtn><svg width="9" height="9" fill="none"><path d="M.5.5h8v8h-8zM0 1.500h9" stroke="#000" /></svg></ViewBtn>
            <ViewBtn><svg width="9" height="9" fill="none"><path d="M3 3V.7h5V5H6M.7 3.700h5v4h-5z" stroke="#000" strokeWidth="1.300" /></svg></ViewBtn>
            <ViewBtn><XIcon s={9} /></ViewBtn>
          </ViewBar>
          <Viewport><Scene /></Viewport>
        </Right>
      </Main>
      <Status>
        <Prog><ProgBtn><svg width="10" height="10" viewBox="0 0 10 10"><path d="M2 1l6 8M8 1L2 9" stroke="#aeb1b3" strokeWidth="2.600" /></svg></ProgBtn><ProgField /></Prog>
        <SizeGrip width="9" height="13" viewBox="0 0 9 13" stroke="#191c1e"><path d="M0 13L9 1M3 13l6-8M6 13l3-4" /></SizeGrip>
      </Status>
      <Bottom><Notch /><Notch /></Bottom>
    </Win>
  );
}
